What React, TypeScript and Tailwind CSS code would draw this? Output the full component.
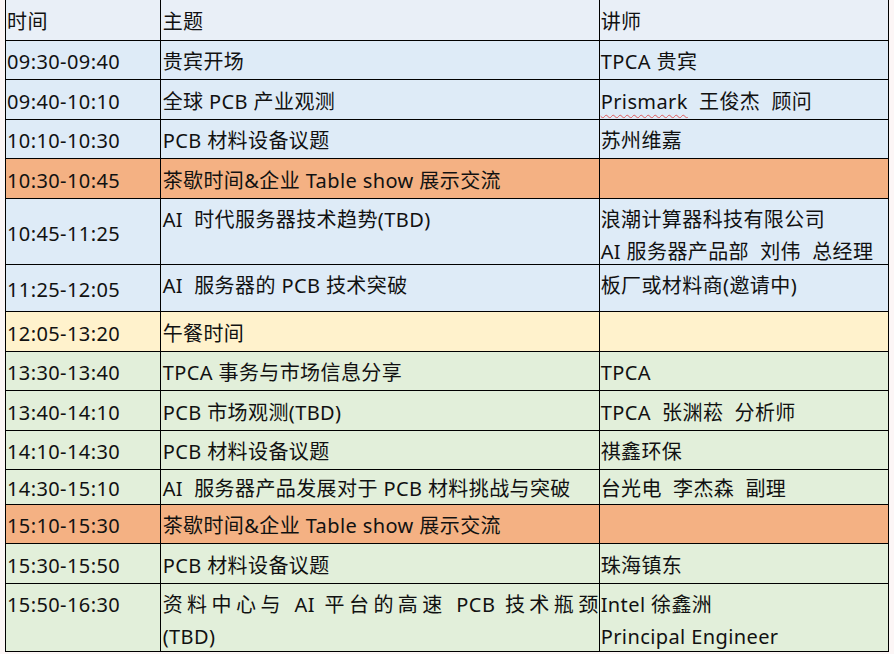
type Cell = { text: React.ReactNode; top?: boolean };
type Row = { h: string; bg: string; cells: Cell[] };

const blue = "bg-[#deebf7]";
const orange = "bg-[#f4b183]";
const yellow = "bg-[#fff2cc]";
const green = "bg-[#e2efda]";

const rows: Row[] = [
  { h: "h-[41px]", bg: "bg-[#e9eff7]", cells: [{ text: "时间" }, { text: "主题" }, { text: "讲师" }] },
  { h: "h-[39px]", bg: blue, cells: [{ text: "09:30-09:40" }, { text: "贵宾开场" }, { text: "TPCA 贵宾" }] },
  {
    h: "h-[40px]",
    bg: blue,
    cells: [
      { text: "09:40-10:10" },
      { text: "全球 PCB 产业观测" },
      {
        text: (
          <div>
            <span className="underline decoration-wavy decoration-[#e05a5a] decoration-1 underline-offset-[5px]">Prismark</span>
            {"  王俊杰  顾问"}
          </div>
        ),
      },
    ],
  },
  { h: "h-[39px]", bg: blue, cells: [{ text: "10:10-10:30" }, { text: "PCB 材料设备议题" }, { text: "苏州维嘉" }] },
  { h: "h-[40px]", bg: orange, cells: [{ text: "10:30-10:45" }, { text: "茶歇时间&企业 Table show 展示交流" }, { text: "" }] },
  {
    h: "h-[66px]",
    bg: blue,
    cells: [
      { text: "10:45-11:25" },
      { text: "AI  时代服务器技术趋势(TBD)", top: true },
      {
        text: (
          <>
            <div>浪潮计算器科技有限公司</div>
            <div>{"AI 服务器产品部  刘伟  总经理"}</div>
          </>
        ),
        top: true,
      },
    ],
  },
  {
    h: "h-[47px]",
    bg: blue,
    cells: [
      { text: "11:25-12:05" },
      { text: "AI  服务器的 PCB 技术突破", top: true },
      { text: "板厂或材料商(邀请中)", top: true },
    ],
  },
  { h: "h-[40px]", bg: yellow, cells: [{ text: "12:05-13:20" }, { text: "午餐时间" }, { text: "" }] },
  { h: "h-[39px]", bg: green, cells: [{ text: "13:30-13:40" }, { text: "TPCA 事务与市场信息分享" }, { text: "TPCA" }] },
  { h: "h-[40px]", bg: green, cells: [{ text: "13:40-14:10" }, { text: "PCB 市场观测(TBD)" }, { text: "TPCA  张渊菘  分析师" }] },
  { h: "h-[39px]", bg: green, cells: [{ text: "14:10-14:30" }, { text: "PCB 材料设备议题" }, { text: "祺鑫环保" }] },
  {
    h: "h-[35px]",
    bg: green,
    cells: [{ text: "14:30-15:10" }, { text: "AI  服务器产品发展对于 PCB 材料挑战与突破" }, { text: "台光电  李杰森  副理" }],
  },
  { h: "h-[39px]", bg: orange, cells: [{ text: "15:10-15:30" }, { text: "茶歇时间&企业 Table show 展示交流" }, { text: "" }] },
  { h: "h-[40px]", bg: green, cells: [{ text: "15:30-15:50" }, { text: "PCB 材料设备议题" }, { text: "珠海镇东" }] },
  {
    h: "h-[67px]",
    bg: green,
    cells: [
      { text: "15:50-16:30", top: true },
      {
        text: (
          <>
            <div className="text-justify [text-align-last:justify]">资料中心与 AI 平台的高速 PCB 技术瓶颈</div>
            <div>(TBD)</div>
          </>
        ),
        top: true,
      },
      {
        text: (
          <>
            <div>Intel 徐鑫洲</div>
            <div>Principal Engineer</div>
          </>
        ),
        top: true,
      },
    ],
  },
];

const widths = ["w-[155px] pl-[1px]", "w-[440px] pl-[2px]", "w-[289px] pl-[1px]"];

export default function App() {
  return (
    <div
      className="min-h-[654px] w-[894px] bg-[#fcf6f6] pl-[5px] text-[20px] leading-[32px] tracking-[0.4px] text-[#111]"
      style={{ fontFamily: '"Noto Sans", "Noto Sans CJK SC", sans-serif' }}
    >
      <div className="flex w-[884px] flex-col border-x border-b border-black">
        {rows.map((row, i) => (
          <div key={i} className={`flex ${row.h} ${row.bg} ${i < rows.length - 1 ? "border-b border-black" : ""}`}>
            {row.cells.map((c, j) => (
              <div
                key={j}
                className={`flex flex-col whitespace-pre-wrap ${widths[j]} ${j < 2 ? "border-r border-black" : ""} ${
                  c.top ? "justify-start pt-[5px]" : "justify-center pt-[4px]"
                }`}
              >
                {c.text}
              </div>
            ))}
          </div>
        ))}
      </div>
    </div>
  );
}
